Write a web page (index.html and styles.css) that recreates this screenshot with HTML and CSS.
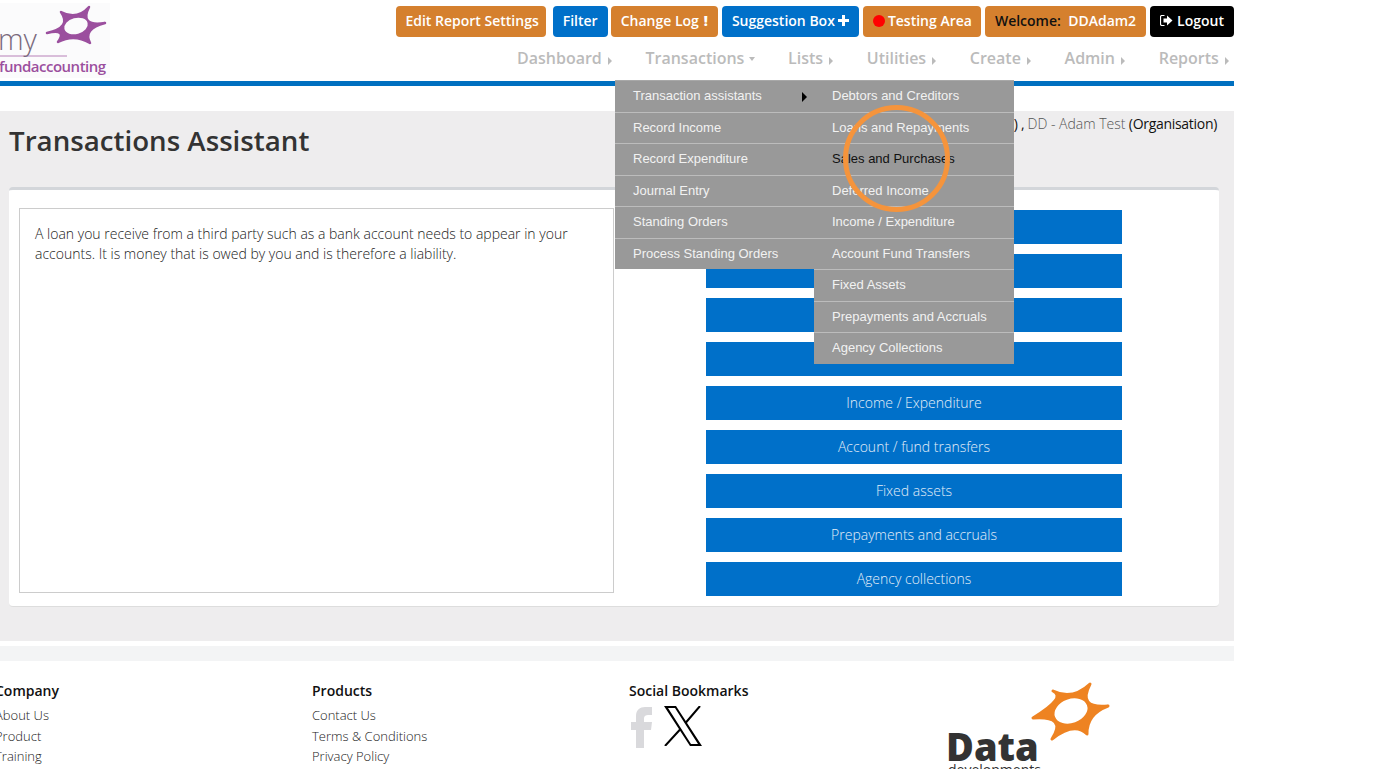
FILE: index.html
```html
<!DOCTYPE html>
<html lang="en">
<head>
  <meta charset="UTF-8">
  <meta name="viewport" content="width=device-width, initial-scale=1.0">
  <title>Transactions Assistant</title>
  <link rel="stylesheet" href="styles.css">
</head>
<body>
  <div class="page">
    <header class="site-header">
      <a class="logo" href="#">
        <svg width="110" height="75" viewBox="0 0 110 75">
          <rect width="110" height="75" fill="#fbfbfc"/>
          <path d="M61 9Q77 17.500 89 4Q79 24 105 20Q82.500 26 90 40Q74 30.500 58 39Q67.500 25.500 47 30Q72 24.500 61 9Z" fill="#9b4f9e" stroke="#9b4f9e" stroke-width="2.500" stroke-linejoin="round"/>
          <ellipse cx="76" cy="23" rx="12" ry="8" fill="#fbfbfc" transform="rotate(-15 76 23)"/>
          <path d="M0 53H67" stroke="#9b4f9e" stroke-width="1" opacity=".7"/>
          <text x="-2" y="47" class="logo-my">my</text>
          <text x="-1" y="69" class="logo-fund">fundaccounting</text>
        </svg>
      </a>
      <div class="header-right">
        <div class="top-buttons">
          <a class="top-btn orange edit" href="#">Edit Report Settings</a>
          <a class="top-btn blue filter" href="#">Filter</a>
          <a class="top-btn orange" href="#">Change Log <span class="bang">!</span></a>
          <a class="top-btn blue" href="#">Suggestion Box <svg class="plus" width="11" height="11" viewBox="0 0 11 11"><path d="M4 0h3v4h4v3H7v4H4V7H0V4h4z" fill="currentColor"/></svg></a>
          <a class="top-btn orange testing" href="#"><span class="red-dot"></span>Testing Area</a>
          <a class="top-btn orange" href="#"><span class="welcome">Welcome:</span>&nbsp; DDAdam2</a>
          <a class="top-btn black" href="#"><svg class="logout-icon" width="13" height="11" viewBox="0 0 13 11"><path d="M4.500.5H2Q.5.500.5 2v7q0 1.500 1.500 1.500h2.500" fill="none" stroke="currentColor" stroke-width="1.200"/><path d="M3.500 3.500H7V.5l5.500 5-5.500 5v-3H3.500z" fill="currentColor"/></svg> Logout</a>
        </div>
        <nav class="main-nav">
          <a href="#">Dashboard <i class="arrow-right"></i></a>
          <a href="#">Transactions <i class="arrow-down"></i></a>
          <a href="#">Lists <i class="arrow-right"></i></a>
          <a href="#">Utilities <i class="arrow-right"></i></a>
          <a href="#">Create <i class="arrow-right"></i></a>
          <a href="#">Admin <i class="arrow-right"></i></a>
          <a href="#">Reports <i class="arrow-right"></i></a>
        </nav>
      </div>
    </header>

    <main class="content">
      <div class="title-row">
        <h1>Transactions Assistant</h1>
        <p class="org">) , <span class="org-name">DD - Adam Test</span> (Organisation)</p>
      </div>
      <section class="card">
        <div class="help-box">
          <p>A loan you receive from a third party such as a bank account needs to appear in your accounts. It is money that is owed by you and is therefore a liability.</p>
        </div>
        <div class="assistant-list">
          <a href="#">Debtors and creditors</a>
          <a href="#">Loans and repayments</a>
          <a href="#">Sales and purchases</a>
          <a href="#">Deferred income</a>
          <a href="#">Income / Expenditure</a>
          <a href="#">Account / fund transfers</a>
          <a href="#">Fixed assets</a>
          <a href="#">Prepayments and accruals</a>
          <a href="#">Agency collections</a>
        </div>
      </section>
    </main>

    <div class="footer-band"></div>

    <footer class="site-footer">
      <div class="footer-col">
        <h4>Company</h4>
        <a href="#">About Us</a>
        <a href="#">Product</a>
        <a href="#">Training</a>
      </div>
      <div class="footer-col">
        <h4>Products</h4>
        <a href="#">Contact Us</a>
        <a href="#">Terms &amp; Conditions</a>
        <a href="#">Privacy Policy</a>
      </div>
      <div class="footer-col">
        <h4>Social Bookmarks</h4>
        <div class="social">
          <svg width="24" height="42" viewBox="0 0 24 42"><path d="M7 42V24H2v-8h5v-6C7 4 11 1 16 1h7v8h-4c-2 0-4 1-4 3v4h8l-1 8h-7v18z" fill="#d9d9dc"/></svg>
          <svg width="38" height="40" viewBox="0 0 38 40"><path d="M0 0H12L38 40H26ZM4 2 27 38H34L11 2Z" fill="#000" fill-rule="evenodd"/><path d="M36 0 21.500 17M16.500 23 1 40" stroke="#000" stroke-width="2" fill="none"/></svg>
        </div>
      </div>
      <div class="footer-logo">
        <svg width="165" height="100" viewBox="0 0 165 100">
          <path d="M105 10Q124.500 19.500 142 3Q129 28 160 25Q138.500 33 139 53Q126.500 40.500 104 58Q119.500 34.500 85 37Q119 16.500 105 10Z" fill="#ee8322" stroke="#ee8322" stroke-width="3" stroke-linejoin="round"/>
          <ellipse cx="123" cy="30" rx="17" ry="12" fill="#fff" transform="rotate(-20 123 30)"/>
          <text x="-2" y="80" class="data-word">Data</text>
          <text x="0" y="94" class="data-sub">developments</text>
        </svg>
      </div>
    </footer>

    <div class="dropdown">
      <ul class="menu-first">
        <li>Transaction assistants<i class="menu-arrow"></i></li>
        <li>Record Income</li>
        <li>Record Expenditure</li>
        <li>Journal Entry</li>
        <li>Standing Orders</li>
        <li>Process Standing Orders</li>
      </ul>
      <ul class="menu-second">
        <li>Debtors and Creditors</li>
        <li>Loans and Repayments</li>
        <li class="hovered">Sales and Purchases</li>
        <li>Deferred Income</li>
        <li>Income / Expenditure</li>
        <li>Account Fund Transfers</li>
        <li>Fixed Assets</li>
        <li>Prepayments and Accruals</li>
        <li>Agency Collections</li>
      </ul>
    </div>
    <div class="click-ring"></div>
  </div>
</body>
</html>
```

FILE: styles.css
```css
* {
  box-sizing: border-box;
}

html, body {
  margin: 0;
  height: 100%;
  overflow: hidden;
  background: white;
}

body {
  font-family: "Open Sans", Arial, sans-serif;
  font-size: 14px;
  color: #333;
}

a {
  text-decoration: none;
  color: inherit;
}

.page {
  position: relative;
  width: 1234px;
}

/* header */
.site-header {
  display: flex;
  justify-content: space-between;
  height: 86px;
  border-bottom: 5px solid #0070c0;
  padding-top: 3px;
}

.logo {
  display: block;
  height: 75px;
}

.logo-my {
  font-family: "Open Sans", sans-serif;
  font-weight: 300;
  font-size: 29px;
  fill: #7a6a7c;
}

.logo-fund {
  font-family: "Open Sans", sans-serif;
  font-weight: 600;
  font-size: 15px;
  letter-spacing: -0.5px;
  fill: #9b4f9e;
}

.header-right {
  display: flex;
  flex-direction: column;
  align-items: flex-end;
}

.top-buttons {
  display: flex;
  gap: 4px;
  margin-top: 3px;
}

.top-btn {
  display: flex;
  align-items: center;
  justify-content: center;
  height: 31px;
  padding: 0 10px 2px;
  border-radius: 4px;
  font-size: 14px;
  font-weight: 600;
  color: #fff;
  white-space: nowrap;
}

.orange {
  background: #d5802e;
}

.blue {
  background: #0070c9;
}

.black {
  background: #000;
}

.edit {
  padding-left: 9px;
  padding-right: 7px;
}

.filter {
  margin-left: 3px;
  margin-right: -1px;
}

.testing {
  padding-right: 9px;
}

.bang {
  font-weight: 800;
  margin-left: 5px;
}

.plus {
  margin-left: 3px;
}

.red-dot {
  width: 12px;
  height: 12px;
  margin-top: 1px;
  margin-right: 3px;
  border-radius: 50%;
  background: #f00;
}

.welcome {
  color: #111;
}

.logout-icon {
  margin-right: 4px;
}

.main-nav {
  display: flex;
  margin-top: 10px;
  margin-right: 5px;
  gap: 33.5px;
  font-size: 16px;
  font-weight: 600;
  line-height: 22px;
  color: #bbb;
}

.arrow-right {
  display: inline-block;
  margin-left: 2px;
  vertical-align: -1px;
  border-left: 4px solid #bbb;
  border-top: 4px solid transparent;
  border-bottom: 4px solid transparent;
}

.arrow-down {
  display: inline-block;
  margin-left: 0;
  vertical-align: 3px;
  border-top: 4px solid #bbb;
  border-left: 3.5px solid transparent;
  border-right: 3.5px solid transparent;
}

/* main */
.content {
  margin-top: 25px;
  height: 530px;
  background: #eeedee;
  padding: 0 15px 0 9px;
}

.title-row {
  display: flex;
  justify-content: space-between;
  height: 76px;
}

h1 {
  margin: 10px 0 0;
  font-size: 27.7px;
  font-weight: 600;
  line-height: 38px;
  color: #333;
}

.org {
  margin: 3px 2px 0 0;
  font-size: 14px;
  letter-spacing: -0.3px;
  line-height: 20px;
  color: #111;
}

.org-name {
  font-weight: 300;
  letter-spacing: 0;
  color: #555;
}

.card {
  display: flex;
  height: 420px;
  padding: 18px 97px 0 10px;
  background: white;
  border-top: 3px solid #d3d6da;
  border-bottom: 1px solid #ddd;
  border-radius: 4px;
  justify-content: space-between;
}

.help-box {
  width: 595px;
  height: 385px;
  padding: 15px;
  border: 1px solid #ccc;
  font-weight: 300;
  line-height: 20px;
  color: #222;
}

.help-box p {
  margin: 0;
}

.assistant-list {
  display: flex;
  flex-direction: column;
  gap: 10px;
  width: 416px;
  padding-top: 2px;
}

.assistant-list a {
  height: 34px;
  line-height: 34px;
  text-align: center;
  background: #0070c9;
  color: #e4eef8;
  font-weight: 300;
}

/* footer */
.footer-band {
  height: 15px;
  margin-top: 5px;
  background: #f3f4f5;
}

.site-footer {
  display: flex;
  margin-left: -5px;
  padding-top: 20px;
}

.footer-col {
  width: 317px;
  display: flex;
  flex-direction: column;
  font-size: 13px;
  font-weight: 300;
  color: #222;
}

.footer-col h4 {
  margin: 0 0 4px;
  font-size: 14px;
  font-weight: 600;
  line-height: 20px;
  color: #111;
}

.footer-col a {
  line-height: 20.5px;
}

.social {
  display: flex;
  align-items: flex-start;
  gap: 11px;
  margin-top: 1px;
}

.footer-logo {
  margin-left: 2px;
  height: 88px;
}

.data-word {
  font-family: "Open Sans", sans-serif;
  font-weight: 800;
  font-size: 38px;
  fill: #333;
}

.data-sub {
  font-family: "Open Sans", sans-serif;
  font-size: 14px;
  fill: #333;
}

/* open menu, lies over the page */
.dropdown {
  position: absolute;
  left: 615px;
  top: 80px;
  display: flex;
  align-items: flex-start;
  font-family: "Liberation Sans", Arial, sans-serif;
  font-size: 13px;
  color: #f2f2f2;
}

.dropdown ul {
  margin: 0;
  padding: 0;
  list-style: none;
  background: #999;
  border-top: 1px solid #a8a8a8;
}

.menu-first {
  width: 199px;
}

.menu-second {
  width: 200px;
}

.dropdown li {
  position: relative;
  height: 31.55px;
  padding-left: 18px;
  line-height: 30px;
  border-bottom: 1px solid #bcbcbc;
}

.dropdown li:last-child {
  height: 30.55px;
  border-bottom: 0;
}

.dropdown li.hovered {
  color: #111;
}

.menu-arrow {
  position: absolute;
  left: 187px;
  top: 11px;
  border-left: 5px solid #000;
  border-top: 5px solid transparent;
  border-bottom: 5px solid transparent;
}

.click-ring {
  position: absolute;
  left: 843px;
  top: 105px;
  width: 107px;
  height: 107px;
  border: 5px solid #f5943c;
  border-radius: 50%;
}
```
